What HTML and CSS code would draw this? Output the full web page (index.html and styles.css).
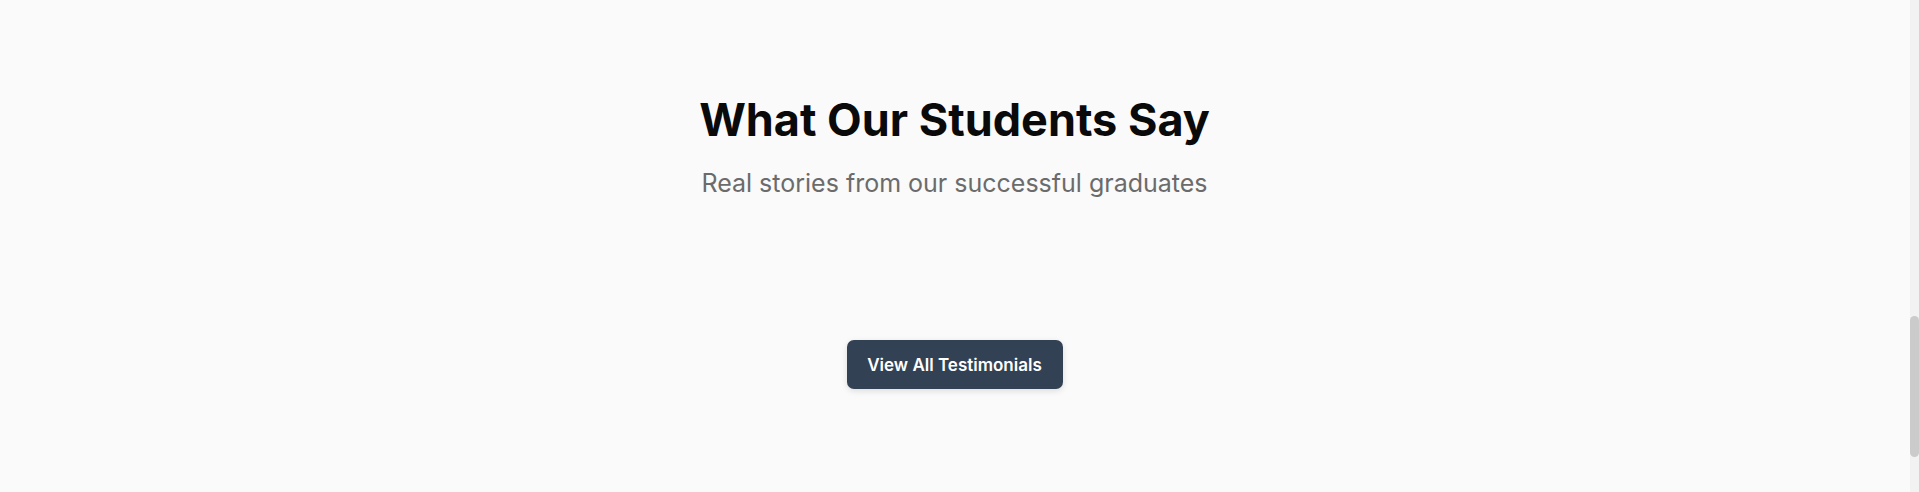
FILE: index.html
```html
<!DOCTYPE html>
<html lang="en">
<head>
<meta charset="utf-8">
<title>Testimonials</title>
<link rel="stylesheet" href="styles.css">
</head>
<body>
<section class="testimonials">
  <header class="section-header">
    <h2 class="section-title">What Our Students Say</h2>
    <p class="section-subtitle">Real stories from our successful graduates</p>
  </header>
  <div class="testimonial-list"></div>
  <div class="actions">
    <a class="btn" href="#">View All Testimonials</a>
  </div>
</section>
<div class="scrollbar"><div class="scrollbar-thumb"></div></div>
</body>
</html>
```

FILE: styles.css
```css
* { box-sizing: border-box; }
html, body { margin: 0; padding: 0; }
body {
  background: #fafafa;
  font-family: Inter, "Noto Sans", sans-serif;
  color: #0a0a0a;
  height: 492px;
  overflow: hidden;
}
.testimonials {
  padding: 92px 10px 0 0;
  display: flex;
  flex-direction: column;
  align-items: center;
}
.section-header { text-align: center; }
.section-title {
  margin: 0;
  font-size: 45px;
  line-height: 56px;
  font-weight: 700;
  color: #0a0a0a;
}
.section-subtitle {
  margin: 17px 0 0;
  font-size: 25px;
  line-height: 36px;
  color: #6b6b6b;
}
.testimonial-list { height: 139px; }
.actions { display: flex; justify-content: center; }
.btn {
  display: inline-flex;
  align-items: center;
  justify-content: center;
  width: 216px;
  height: 49px;
  background: #334155;
  color: #ffffff;
  border-radius: 7px;
  font-size: 17px;
  font-weight: 600;
  text-decoration: none;
  box-shadow: 0 2px 6px rgba(0,0,0,0.12);
}
.scrollbar {
  position: fixed;
  top: 0;
  right: 0;
  width: 9px;
  height: 492px;
  background: #f2f2f2;
}
.scrollbar-thumb {
  position: absolute;
  top: 316px;
  left: 0;
  width: 9px;
  height: 141px;
  background: #cbcbcb;
  border-radius: 5px;
}
```
